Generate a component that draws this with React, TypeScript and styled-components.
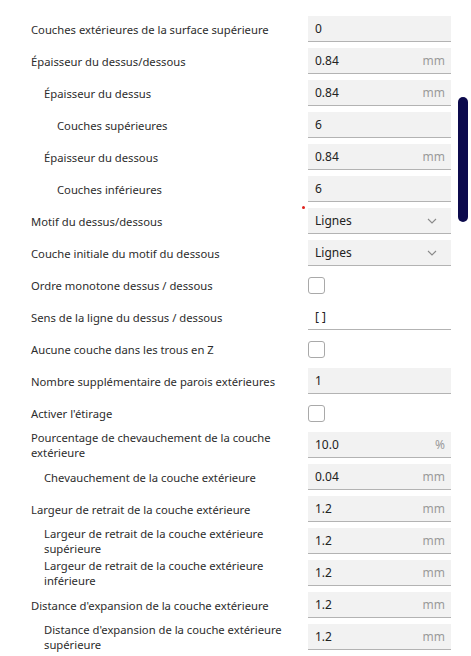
import React from "react";
import styled, { createGlobalStyle } from "styled-components";

const GlobalStyle = createGlobalStyle`
  html, body {
    margin: 0;
    padding: 0;
    background: #ffffff;
  }
  body {
    font-family: "Noto Sans", "Open Sans", sans-serif;
    font-size: 11.25px;
    color: #2b2b2b;
  }
`;

const Page = styled.div`
  position: relative;
  width: 471px;
  height: 656px;
  overflow: hidden;
  padding: 13px 0 0 31px;
  box-sizing: border-box;
`;

const List = styled.div`
  display: flex;
  flex-direction: column;
  width: 420px;
`;

const Row = styled.div`
  display: grid;
  grid-template-columns: 1fr 143px;
  column-gap: 6px;
  align-items: center;
  height: 32px;
`;

const Label = styled.div<{ level: number }>`
  padding-left: ${({ level }) => level * 13}px;
  line-height: 15px;
  color: #2d2d2d;
`;

const Control = styled.div`
  position: relative;
  height: 26px;
  display: flex;
  align-items: center;
`;

const Field = styled.div<{ plain?: boolean }>`
  flex: 1;
  height: 26px;
  box-sizing: border-box;
  display: flex;
  align-items: center;
  justify-content: space-between;
  padding: 0 6px 0 7px;
  background: ${({ plain }) => (plain ? "transparent" : "#f2f2f2")};
  border-bottom: 1px solid #b3b3b3;
  font-size: 12px;
`;

const Value = styled.span`
  color: #222;
`;

const Unit = styled.span`
  color: #9a9a9a;
`;

const Chevron = styled.svg`
  width: 10px;
  height: 6px;
  margin-right: 8px;
`;

const Check = styled.div`
  width: 17px;
  height: 17px;
  box-sizing: border-box;
  border: 1px solid #a9a9a9;
  border-radius: 3px;
  background: #fff;
`;

const Dot = styled.span`
  position: absolute;
  left: -6px;
  top: -2px;
  width: 3px;
  height: 3px;
  border-radius: 50%;
  background: #e0201b;
`;

const Scrollbar = styled.div`
  position: absolute;
  left: 458px;
  top: 97px;
  width: 10px;
  height: 125px;
  border-radius: 5px;
  background: #0c0a4d;
`;

type Item = {
  label: string;
  level: number;
  kind: "num" | "select" | "check" | "text";
  value?: string;
  unit?: string;
  dot?: boolean;
};

const items: Item[] = [
  { label: "Couches extérieures de la surface supérieure", level: 0, kind: "num", value: "0" },
  { label: "Épaisseur du dessus/dessous", level: 0, kind: "num", value: "0.84", unit: "mm" },
  { label: "Épaisseur du dessus", level: 1, kind: "num", value: "0.84", unit: "mm" },
  { label: "Couches supérieures", level: 2, kind: "num", value: "6" },
  { label: "Épaisseur du dessous", level: 1, kind: "num", value: "0.84", unit: "mm" },
  { label: "Couches inférieures", level: 2, kind: "num", value: "6" },
  { label: "Motif du dessus/dessous", level: 0, kind: "select", value: "Lignes", dot: true },
  { label: "Couche initiale du motif du dessous", level: 0, kind: "select", value: "Lignes" },
  { label: "Ordre monotone dessus / dessous", level: 0, kind: "check" },
  { label: "Sens de la ligne du dessus / dessous", level: 0, kind: "text", value: "[ ]" },
  { label: "Aucune couche dans les trous en Z", level: 0, kind: "check" },
  { label: "Nombre supplémentaire de parois extérieures", level: 0, kind: "num", value: "1" },
  { label: "Activer l'étirage", level: 0, kind: "check" },
  { label: "Pourcentage de chevauchement de la couche extérieure", level: 0, kind: "num", value: "10.0", unit: "%" },
  { label: "Chevauchement de la couche extérieure", level: 1, kind: "num", value: "0.04", unit: "mm" },
  { label: "Largeur de retrait de la couche extérieure", level: 0, kind: "num", value: "1.2", unit: "mm" },
  { label: "Largeur de retrait de la couche extérieure supérieure", level: 1, kind: "num", value: "1.2", unit: "mm" },
  { label: "Largeur de retrait de la couche extérieure inférieure", level: 1, kind: "num", value: "1.2", unit: "mm" },
  { label: "Distance d'expansion de la couche extérieure", level: 0, kind: "num", value: "1.2", unit: "mm" },
  { label: "Distance d'expansion de la couche extérieure supérieure", level: 1, kind: "num", value: "1.2", unit: "mm" },
];

function Setting({ item }: { item: Item }) {
  let control: React.ReactNode;
  if (item.kind === "check") {
    control = <Check />;
  } else if (item.kind === "select") {
    control = (
      <Field>
        <Value>{item.value}</Value>
        <Chevron viewBox="0 0 10 6">
          <path d="M1 1 L5 5 L9 1" fill="none" stroke="#8a8a8a" strokeWidth="1.1" />
        </Chevron>
      </Field>
    );
  } else {
    control = (
      <Field plain={item.kind === "text"}>
        <Value>{item.value}</Value>
        {item.unit && <Unit>{item.unit}</Unit>}
      </Field>
    );
  }

  return (
    <Row>
      <Label level={item.level}>{item.label}</Label>
      <Control>
        {item.dot && <Dot />}
        {control}
      </Control>
    </Row>
  );
}

export default function App() {
  return (
    <>
      <GlobalStyle />
      <Page>
        <List>
          {items.map((item) => (
            <Setting key={item.label} item={item} />
          ))}
        </List>
        <Scrollbar />
      </Page>
    </>
  );
}
